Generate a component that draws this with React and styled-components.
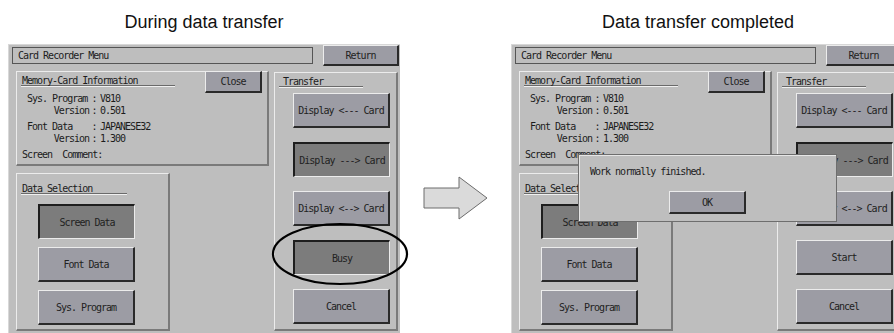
import React from "react";
import styled, { createGlobalStyle } from "styled-components";

const GlobalStyle = createGlobalStyle`
  body {
    margin: 0;
    background: #ffffff;
  }
`;

const Page = styled.div`
  width: 894px;
  height: 333px;
  overflow: hidden;
  display: flex;
  background: #ffffff;
`;

const Figure = styled.div`
  flex: 0 0 392px;
  display: flex;
  flex-direction: column;
  margin-left: ${(p) => p.$offset}px;
`;

const Caption = styled.div`
  height: 44px;
  display: flex;
  align-items: center;
  justify-content: center;
  padding-right: ${(p) => p.$shift || 0}px;
  font-family: "Liberation Sans", Arial, sans-serif;
  font-size: 18px;
  color: #111;
`;

const Screen = styled.div`
  position: relative;
  height: 289px;
  box-sizing: border-box;
  background: #bebebe;
  border-top: 1px solid #d8d8d8;
  border-left: 1px solid #d8d8d8;
  font-family: "DejaVu Sans Mono", monospace;
  font-size: 10px;
  letter-spacing: -1px;
  color: #1c1c1c;
`;

const TopRow = styled.div`
  display: flex;
  align-items: flex-start;
  padding-left: 3px;
  gap: 10px;
`;

const TitleBox = styled.div`
  margin-top: 2px;
  width: 301px;
  height: 17px;
  box-sizing: border-box;
  border: 1px solid #555;
  padding-left: 5px;
  line-height: 15px;
`;

const Button = styled.div`
  width: ${(p) => p.$w || 97}px;
  height: ${(p) => p.$h || 35}px;
  box-sizing: border-box;
  display: flex;
  align-items: center;
  justify-content: center;
  background: ${(p) => (p.$pressed ? "#7c7c7c" : "#9c9ca4")};
  border-style: solid;
  border-width: ${(p) => (p.$pressed ? "2px 1px 1px 2px" : "1px 2px 2px 1px")};
  border-color: ${(p) =>
    p.$pressed
      ? "#1e1e1e #ececec #ececec #1e1e1e"
      : "#ececec #2a2a2a #2a2a2a #ececec"};
  color: #222;
  white-space: pre;
`;

const Body = styled.div`
  display: flex;
  align-items: flex-start;
  padding-left: 7px;
  margin-top: 5px;
  gap: 5px;
`;

const LeftColumn = styled.div`
  display: flex;
  flex-direction: column;
  gap: 7px;
`;

const Panel = styled.div`
  position: relative;
  width: ${(p) => p.$w}px;
  height: ${(p) => p.$h}px;
  margin-top: ${(p) => p.$top || 0}px;
  box-sizing: border-box;
  border-style: solid;
  border-width: 1px 2px 2px 1px;
  border-color: #ececec #7a7a7a #7a7a7a #ececec;
  display: flex;
  flex-direction: column;
`;

const PanelHeader = styled.div`
  display: flex;
  align-items: flex-start;
  height: 22px;
`;

const SectionTitle = styled.div`
  margin: ${(p) => p.$top || 3}px 0 0 4px;
  width: ${(p) => p.$w}px;
  height: 11px;
  line-height: 11px;
  padding-left: ${(p) => p.$pad || 1}px;
  box-sizing: border-box;
  border-bottom: 1px solid #6a6a6a;
  box-shadow: 0 1px 0 #f0f0f0;
`;

const CloseSlot = styled.div`
  margin: -1px 5px 0 auto;
`;

const InfoBlock = styled.div`
  margin: -1px 0 0 10px;
`;

const InfoGroup = styled.div`
  margin-top: ${(p) => p.$gap || 0}px;
`;

const InfoRow = styled.div`
  display: grid;
  grid-template-columns: 62px 10px auto;
  height: 12px;
  line-height: 12px;
`;

const InfoLabel = styled.span`
  text-align: ${(p) => (p.$right ? "right" : "left")};
  white-space: pre;
`;

const Colon = styled.span`
  text-align: center;
`;

const InfoValue = styled.span`
  padding-left: 1px;
`;

const Comment = styled.div`
  margin: 4px 0 0 5px;
  height: 12px;
  line-height: 12px;
  white-space: pre;
`;

const ButtonStack = styled.div`
  display: flex;
  flex-direction: column;
  gap: ${(p) => p.$gap}px;
  margin: ${(p) => p.$top}px 0 0 ${(p) => p.$left}px;
`;

const ArrowColumn = styled.div`
  flex: 0 0 111px;
  padding: 175px 0 0 22px;
  box-sizing: border-box;
`;

const Ellipse = styled.svg`
  position: absolute;
  left: 261px;
  top: 177px;
  overflow: visible;
`;

const Dialog = styled.div`
  position: absolute;
  left: 66px;
  top: 109px;
  width: 259px;
  height: 68px;
  box-sizing: border-box;
  background: #bebebe;
  border: 1px solid #6e6e6e;
  box-shadow: inset 1px 1px 0 #e6e6e6;
  display: flex;
  flex-direction: column;
  align-items: center;
`;

const DialogText = styled.div`
  align-self: flex-start;
  margin: 11px 0 0 11px;
  height: 12px;
  line-height: 12px;
`;

const DialogActions = styled.div`
  margin-top: 13px;
`;

function CardScreen({ completed }) {
  return (
    <Screen>
      <TopRow>
        <TitleBox>Card Recorder Menu</TitleBox>
        <Button $w={76} $h={21}>Return</Button>
      </TopRow>
      <Body>
        <LeftColumn>
          <Panel $w={253} $h={95}>
            <PanelHeader>
              <SectionTitle $w={154}>Memory-Card Information</SectionTitle>
              <CloseSlot>
                <Button $w={57} $h={22}>Close</Button>
              </CloseSlot>
            </PanelHeader>
            <InfoBlock>
              <InfoGroup>
                <InfoRow>
                  <InfoLabel>Sys. Program</InfoLabel>
                  <Colon>:</Colon>
                  <InfoValue>V810</InfoValue>
                </InfoRow>
                <InfoRow>
                  <InfoLabel $right>Version</InfoLabel>
                  <Colon>:</Colon>
                  <InfoValue>0.501</InfoValue>
                </InfoRow>
              </InfoGroup>
              <InfoGroup $gap={4}>
                <InfoRow>
                  <InfoLabel>Font Data</InfoLabel>
                  <Colon>:</Colon>
                  <InfoValue>JAPANESE32</InfoValue>
                </InfoRow>
                <InfoRow>
                  <InfoLabel $right>Version</InfoLabel>
                  <Colon>:</Colon>
                  <InfoValue>1.300</InfoValue>
                </InfoRow>
              </InfoGroup>
            </InfoBlock>
            <Comment>{"Screen  Comment:"}</Comment>
          </Panel>
          <Panel $w={154} $h={158}>
            <SectionTitle $w={106} $top={9}>Data Selection</SectionTitle>
            <ButtonStack $gap={8} $top={10} $left={21}>
              <Button $pressed>Screen Data</Button>
              <Button>Font Data</Button>
              <Button>Sys. Program</Button>
            </ButtonStack>
          </Panel>
        </LeftColumn>
        <Panel $w={124} $h={259} $top={1}>
          <SectionTitle $w={84} $pad={4}>Transfer</SectionTitle>
          <ButtonStack $gap={14} $top={6} $left={18}>
            <Button>{"Display <--- Card"}</Button>
            <Button $pressed>{"Display ---> Card"}</Button>
            <Button>{"Display <--> Card"}</Button>
            {completed ? <Button>Start</Button> : <Button $pressed>Busy</Button>}
            <Button>Cancel</Button>
          </ButtonStack>
        </Panel>
      </Body>
      {!completed && (
        <Ellipse width="140" height="64" viewBox="0 0 140 64">
          <ellipse cx="70" cy="32" rx="67" ry="30" fill="none" stroke="#000" strokeWidth="2.2" />
        </Ellipse>
      )}
      {completed && (
        <Dialog>
          <DialogText>Work normally finished.</DialogText>
          <DialogActions>
            <Button $w={77} $h={23}>OK</Button>
          </DialogActions>
        </Dialog>
      )}
    </Screen>
  );
}

export default function App() {
  return (
    <>
      <GlobalStyle />
      <Page>
        <Figure $offset={8}>
          <Caption>During data transfer</Caption>
          <CardScreen />
        </Figure>
        <ArrowColumn>
          <svg width="68" height="47" viewBox="0 0 68 47">
            <polygon
              points="2,13 37,13 37,2 65,23 37,44 37,33 2,33"
              fill="#dadada"
              stroke="#6c6c6c"
              strokeWidth="1"
            />
          </svg>
        </ArrowColumn>
        <Figure>
          <Caption $shift={18}>Data transfer completed</Caption>
          <CardScreen completed />
        </Figure>
      </Page>
    </>
  );
}
